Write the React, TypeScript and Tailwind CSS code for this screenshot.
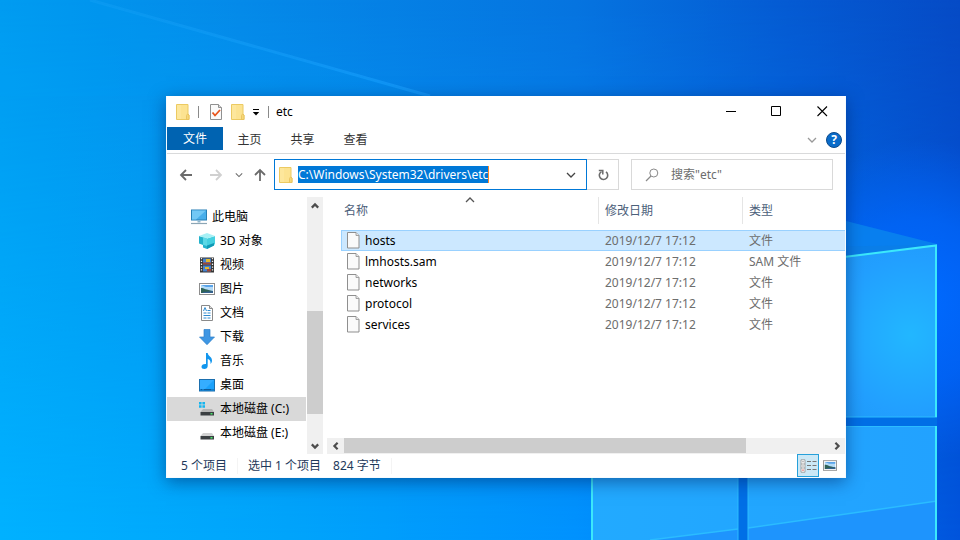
import React from "react";

type IconProps = { className?: string };

const Folder = ({ className = "" }: IconProps) => (
  <svg viewBox="0 0 14 18" className={`h-[18px] w-[14px] shrink-0 ${className}`} aria-hidden="true">
    <path d="M.5 1.500h11.500v9.500l1 1v4.500H.5z" fill="#fce391" stroke="#ecca62" />
    <path d="M10.500 16.500v-4l1-1.500 1.500 1v4.500z" fill="#f7d878" stroke="#e6c05a" strokeWidth=".8" />
    <path d="M1 2h4v14H1z" fill="#fde9a4" opacity=".6" />
  </svg>
);

const CheckedPage = () => (
  <svg viewBox="0 0 14 18" className="h-[18px] w-[14px] shrink-0" aria-hidden="true">
    <path d="M1.500 1.500h8l3 3v12h-11z" fill="#fafafa" stroke="#909090" />
    <path d="M9.500 1.500v3h3" fill="#ddd" stroke="#909090" />
    <path d="M3.500 9.500l2.500 3 5-5.500" fill="none" stroke="#e8541a" strokeWidth="1.800" />
  </svg>
);

const Page = () => (
  <svg viewBox="0 0 13 17" className="h-[17px] w-[13px] shrink-0" aria-hidden="true">
    <path d="M.5 .5h8.500l3 3v12.500H.5z" fill="#fafafa" stroke="#8f8f8f" />
    <path d="M9 .5v3h3" fill="#e8e8e8" stroke="#8f8f8f" strokeWidth=".8" />
  </svg>
);

const Chevron = ({ className = "size-[10px]" }: IconProps) => (
  <svg viewBox="0 0 10 10" className={`shrink-0 ${className}`} aria-hidden="true">
    <path d="M1 3l4 4 4-4" fill="none" stroke="currentColor" strokeWidth="1.300" />
  </svg>
);

const ScrollArrow = ({ className = "" }: IconProps) => (
  <svg viewBox="0 0 10 10" className={`size-[10px] shrink-0 text-[#4d4d4d] ${className}`} aria-hidden="true">
    <path d="M1.800 3.400L5 6.600l3.200-3.200" fill="none" stroke="currentColor" strokeWidth="2.200" />
  </svg>
);

const Arrow = ({ className = "" }: IconProps) => (
  <svg viewBox="0 0 14 14" className={`size-[14px] shrink-0 ${className}`} aria-hidden="true">
    <path d="M13 7H2M7 2L2 7l5 5" fill="none" stroke="currentColor" strokeWidth="1.800" />
  </svg>
);

const Photo = ({ className = "" }: IconProps) => (
  <svg viewBox="0 0 16 12" className={`shrink-0 ${className}`} aria-hidden="true">
    <rect x=".5" y=".5" width="15" height="11" fill="#fff" stroke="#8d8d8d" />
    <rect x="2" y="2" width="12" height="8" fill="#b5dbf7" />
    <path d="M2 2h12v2L7 4z" fill="#5aa4ea" />
    <path d="M2 5c3 0 5 2 12 3v2H2z" fill="#2f6257" />
    <path d="M5 9l9-1v2H3z" fill="#34618f" />
  </svg>
);

const Drive = ({ system = false }: { system?: boolean }) => (
  <svg viewBox="0 0 16 16" className="size-4 shrink-0" aria-hidden="true">
    {system && (
      <path d="M0 1h2.600v2.500H0zM3.400 1H6v2.500H3.400zM0 4.300h2.600v2.500H0zM3.400 4.300H6v2.500H3.400z" fill="#15b5ef" />
    )}
    <path d="M4 8h9l2 3H1.500z" fill={system ? "#b5b5b5" : "#d2d2d2"} />
    <path d="M1.500 11h13.500v3.500h-13.500z" fill="#3b3f42" />
    <rect x="11.500" y="12" width="2" height="1.500" fill="#49e86a" />
  </svg>
);

const icons: Record<string, React.ReactNode> = {
  pc: (
    <svg viewBox="0 0 16 16" className="size-4 shrink-0" aria-hidden="true">
      <rect x=".5" y="1" width="15" height="10" fill="#48aeea" stroke="#277fb5" />
      <path d="M1 1.500h14L5 10.500H1z" fill="#72c8f5" />
      <path d="M6.500 11.500h3v2h-3z" fill="#91b7cc" />
      <path d="M0 14.500h16" stroke="#8ca6b5" strokeWidth="1.200" />
    </svg>
  ),
  cube: (
    <svg viewBox="0 0 16 16" className="size-4 shrink-0" aria-hidden="true">
      <path d="M0 3l8 2.500V16l-4-1.500V12l-4-1.500z" fill="#23b2cb" />
      <path d="M16 3L8 5.500V16l7-3.500 1-2z" fill="#45d0e0" />
      <path d="M0 3l8-3 8 3-8 2.500z" fill="#a6f0f5" />
      <path d="M4 4.200l4 1.300v7.500l-4-1.200z" fill="#5bd8e6" />
      <path d="M8 12.500l7-2.500v2.500L8 16z" fill="#1199b5" />
    </svg>
  ),
  video: (
    <svg viewBox="0 0 16 16" className="size-4 shrink-0" aria-hidden="true">
      <path d="M1 .5h14v15H1z" fill="#353535" />
      <path d="M2.500 1v14M13.500 1v14" stroke="#eee" strokeWidth="1.300" strokeDasharray="1.300 1.500" />
      <path d="M4 1.500h8v6H4zM4 8.500h8v6H4z" fill="#4683cf" />
      <path d="M7 2h4v3H7zM6 10h4v2H6z" fill="#e2b92e" />
      <path d="M4 5.500h8v2H4zM8 12h4v2.500H8z" fill="#9d4639" />
    </svg>
  ),
  picture: <Photo className="h-3 w-4" />,
  document: (
    <svg viewBox="0 0 16 16" className="size-4 shrink-0" aria-hidden="true">
      <path d="M2.500 .5h8l3 3v12h-11z" fill="#fff" stroke="#8a8a8a" />
      <path d="M10.500 .5v3h3" fill="#ddd" stroke="#8a8a8a" />
      <path d="M4.500 6l1.500-3.500L7.500 6M8.500 5.500h3M4.500 8h3M8.500 8h3M4.500 10.500h7M4.500 13h3M8.500 13h3" stroke="#2f8bd0" fill="none" />
    </svg>
  ),
  download: (
    <svg viewBox="0 0 16 16" className="size-4 shrink-0" aria-hidden="true">
      <path d="M5 .5h6V8h4.500L8 15.700.5 8H5z" fill="#3e96e3" stroke="#2d7fc9" strokeWidth=".7" />
    </svg>
  ),
  music: (
    <svg viewBox="0 0 16 16" className="size-4 shrink-0" aria-hidden="true">
      <path d="M7 0h1.700c.3 3.300 4.300 3.500 4.300 7.500 0 1.500-.6 2.700-1.500 3.500.5-3-1-4.500-2.800-5v7c0 1.800-1.400 3-3.400 3C3.500 16 2.500 15 2.500 13.700c0-1.700 1.700-3 4.500-2.700z" fill="#1296ee" />
    </svg>
  ),
  desktop: (
    <svg viewBox="0 0 16 16" className="size-4 shrink-0" aria-hidden="true">
      <rect x=".5" y="2.500" width="15" height="11.500" fill="#1ba1fb" stroke="#1b6fae" />
      <path d="M1 3h14L6 12H1z" fill="#35adff" />
      <path d="M1.500 12.700h13" stroke="#0b4d86" strokeDasharray="2 1 8 1" />
    </svg>
  ),
  driveC: <Drive system />,
  driveE: <Drive />,
};

const places = [
  ["此电脑", "pc"],
  ["3D 对象", "cube"],
  ["视频", "video"],
  ["图片", "picture"],
  ["文档", "document"],
  ["下载", "download"],
  ["音乐", "music"],
  ["桌面", "desktop"],
  ["本地磁盘 (C:)", "driveC"],
  ["本地磁盘 (E:)", "driveE"],
];

const files = [
  ["hosts", "文件"],
  ["lmhosts.sam", "SAM 文件"],
  ["networks", "文件"],
  ["protocol", "文件"],
  ["services", "文件"],
];

const Wallpaper = () => (
  <svg
    viewBox="0 0 960 540"
    preserveAspectRatio="xMidYMid slice"
    className="absolute inset-0 h-full w-full"
    aria-hidden="true"
  >
    <defs>
      <linearGradient id="sky" x1="0" y1="0" x2="1" y2="0">
        <stop offset="0" stopColor="#009bf0" />
        <stop offset=".25" stopColor="#058ae9" />
        <stop offset=".6" stopColor="#0674e0" />
        <stop offset=".82" stopColor="#055bd3" />
        <stop offset="1" stopColor="#064bc6" />
      </linearGradient>
      <linearGradient id="low" x1="0" y1="0" x2="1" y2="0">
        <stop offset="0" stopColor="#00b1ff" />
        <stop offset=".3" stopColor="#00a4fb" />
        <stop offset=".6" stopColor="#0092fe" />
        <stop offset=".85" stopColor="#0070ee" />
        <stop offset="1" stopColor="#0054dc" />
      </linearGradient>
      <linearGradient id="fade" x1="0" y1="0" x2="0" y2="1">
        <stop offset="0" stopColor="#000" />
        <stop offset="1" stopColor="#fff" />
      </linearGradient>
      <mask id="lowMask">
        <rect width="960" height="540" fill="url(#fade)" />
      </mask>
      <radialGradient id="glow" gradientUnits="userSpaceOnUse" cx="920" cy="300" r="160">
        <stop offset="0" stopColor="#006aff" />
        <stop offset=".5" stopColor="#0068ff" stopOpacity=".7" />
        <stop offset="1" stopColor="#0068ff" stopOpacity="0" />
      </radialGradient>
      <radialGradient id="pane" gradientUnits="userSpaceOnUse" cx="910" cy="335" r="130">
        <stop offset="0" stopColor="#22b7ff" />
        <stop offset=".6" stopColor="#229fff" />
        <stop offset="1" stopColor="#1c98f5" />
      </radialGradient>
      <linearGradient id="paneLow" x1="0" y1="0" x2="1" y2="0">
        <stop offset="0" stopColor="#22aaff" />
        <stop offset="1" stopColor="#22a2ff" />
      </linearGradient>
      <linearGradient id="beam" gradientUnits="userSpaceOnUse" x1="90" y1="0" x2="430" y2="96">
        <stop offset="0" stopColor="#1ba5f8" stopOpacity=".5" />
        <stop offset="1" stopColor="#1ba0ff" />
      </linearGradient>
    </defs>
    <rect width="960" height="540" fill="url(#sky)" />
    <rect width="960" height="540" fill="url(#low)" mask="url(#lowMask)" />
    <rect width="960" height="540" fill="url(#glow)" />
    <path d="M90 0L430 96" stroke="url(#beam)" strokeWidth="3" opacity=".6" />
    <path d="M90 0L430 96H0V0z" fill="#00a4ff" opacity=".1" />
    <path d="M846 221l91 23-91 12z" fill="#0a86ee" opacity=".8" />
    <path d="M591 250l346-5v172H591z" fill="#0a7ee8" />
    <path d="M591 290l346-45v172H591z" fill="url(#pane)" />
    <path d="M591 417h346v9H748v114h-10V426H591z" fill="#006fe6" />
    <path d="M591 426h147v114H591zM748 426h189v114H748z" fill="url(#paneLow)" />
    <path d="M748 528l189-27v39H748zM650 540l88-11v11z" fill="#1e94fd" />
    <path d="M748 528l189-27M650 540l88-11" stroke="#2bbcff" strokeWidth="1.500" />
    <path d="M748 540V426.500h188M738 426v114M840 417h97" fill="none" stroke="#2bbcff" />
    <path d="M840 257.500l96-12V417M936 426v114M592 470v70" fill="none" stroke="#3ce8fb" strokeWidth="2" />
  </svg>
);

const tabs = ["主页", "共享", "查看"];

export default function App() {
  return (
    <main className="relative min-h-screen overflow-hidden bg-[#0078d7] font-['Noto_Sans','Noto_Sans_CJK_SC',sans-serif] text-xs text-[#222]">
      <Wallpaper />
      <section
        aria-label="etc"
        className="absolute top-24 right-[114px] left-[166px] border border-t-0 border-[#f5fbff] bg-white shadow-[0_4px_16px_rgba(0,30,90,0.5)]"
      >
        <header className="flex h-[31px] items-center">
          <div className="flex items-center pl-[9px]">
            <Folder />
            <span className="ml-2 h-3 w-px bg-[#8a8a8a]" />
            <button aria-label="属性" className="ml-[10px]">
              <CheckedPage />
            </button>
            <button aria-label="新建文件夹" className="ml-2">
              <Folder />
            </button>
            <button aria-label="自定义快速访问工具栏" className="ml-[7px]">
              <svg viewBox="0 0 8 8" className="size-2" aria-hidden="true">
                <path d="M1 1.500h6" stroke="#000" />
                <path d="M.8 4h6.400L4 7.400z" fill="#000" />
              </svg>
            </button>
            <span className="ml-2 h-3 w-px bg-[#8a8a8a]" />
          </div>
          <h1 className="ml-[7px] text-xs text-black">etc</h1>
          <div className="ml-auto flex text-black">
            <button aria-label="最小化" className="flex h-[31px] w-[46px] items-center justify-center">
              <svg viewBox="0 0 11 11" className="size-[11px]" aria-hidden="true">
                <path d="M1 5.500h10" stroke="currentColor" />
              </svg>
            </button>
            <button aria-label="最大化" className="flex h-[31px] w-[46px] items-center justify-center">
              <svg viewBox="0 0 11 11" className="size-[11px]" aria-hidden="true">
                <path d="M.5 .5h9v9h-9z" fill="none" stroke="currentColor" />
              </svg>
            </button>
            <button aria-label="关闭" className="flex h-[31px] w-[46px] items-center justify-center">
              <svg viewBox="0 0 11 11" className="size-[11px]" aria-hidden="true">
                <path d="M.5 .5l9.500 9.500M10 .5L.5 10" stroke="currentColor" strokeWidth="1.100" />
              </svg>
            </button>
          </div>
        </header>

        <nav aria-label="功能区" className="flex h-[27px] items-start border-b border-[#d9dadb]">
          <button className="h-[23px] w-14 bg-[#0063b1] text-white">文件</button>
          {tabs.map((tab) => (
            <button key={tab} className="h-[26px] w-[53px] text-[#333]">
              {tab}
            </button>
          ))}
          <button aria-label="展开功能区" className="mt-2 ml-auto text-[#999]">
            <Chevron />
          </button>
          <button
            aria-label="帮助"
            className="mt-[5px] mr-[3px] ml-[9px] flex size-4 items-center justify-center rounded-full border border-[#0b4a8c] bg-[#0a6bc9] font-bold text-white"
          >
            ?
          </button>
        </nav>

        <div className="flex h-[43px] items-start pt-[5px] pr-3">
          <div className="flex h-[31px] w-[107px] shrink-0 items-center pl-3 text-[#6b6b6b]">
            <button aria-label="后退">
              <Arrow />
            </button>
            <button aria-label="前进" className="ml-4 text-[#d0d0d0]">
              <Arrow className="rotate-180" />
            </button>
            <button aria-label="最近位置" className="ml-3">
              <Chevron className="size-2" />
            </button>
            <button aria-label="上移" className="ml-[10px]">
              <Arrow className="rotate-90" />
            </button>
          </div>
          <div className="flex h-[31px] min-w-0 grow items-center border border-[#0078d7] pl-1">
            <Folder />
            <input
              aria-label="地址"
              defaultValue="C:\Windows\System32\drivers\etc"
              className="ml-[5px] h-[17px] [field-sizing:content] border-r border-[#ff8728] bg-[#0078d7] text-white outline-none"
            />
            <button aria-label="历史地址" className="mr-[10px] ml-auto text-[#444]">
              <Chevron />
            </button>
          </div>
          <button
            aria-label="刷新"
            className="flex h-[31px] w-8 shrink-0 items-center justify-center border border-l-0 border-[#d9d9d9] text-[#6b6b6b]"
          >
            <svg viewBox="0 0 12 12" className="size-3" aria-hidden="true">
              <path d="M9 2.900A4.200 4.200 0 1 1 4.500 2.600" fill="none" stroke="currentColor" strokeWidth="1.600" />
              <path d="M1.800 1.400h4v4" fill="none" stroke="currentColor" strokeWidth="1.500" />
            </svg>
          </button>
          <label className="ml-3 flex h-[31px] w-[202px] shrink-0 items-center border border-[#d9d9d9] pl-[13px]">
            <svg viewBox="0 0 14 14" className="size-[14px] shrink-0" aria-hidden="true">
              <circle cx="8.800" cy="5" r="4" fill="none" stroke="#8a8a8a" />
              <path d="M6 8L1 13" stroke="#8a8a8a" strokeWidth="1.200" />
            </svg>
            <input
              aria-label="搜索"
              placeholder={'搜索"etc"'}
              className="ml-3 w-full min-w-0 outline-none placeholder:text-[#6d6d6d]"
            />
          </label>
        </div>

        <div className="flex">
          <ul className="min-w-0 flex-[0_0_139px] pt-2 pb-[9px] text-black">
            {places.map(([name, icon], i) => (
              <li key={name}>
                <button
                  className={`flex h-6 w-full items-center gap-[5px] whitespace-nowrap ${i === 0 ? "pl-6" : "pl-8"} ${
                    icon === "driveC" ? "bg-[#d9d9d9]" : ""
                  }`}
                >
                  {icons[icon]}
                  {name}
                </button>
              </li>
            ))}
          </ul>
          <div className="ml-px flex w-4 shrink-0 flex-col items-center bg-[#f0f0f0]">
            <button aria-label="向上滚动" className="flex h-[17px] items-center">
              <ScrollArrow className="rotate-180" />
            </button>
            <div className="flex w-full grow flex-col">
              <div className="grow-[97]" />
              <div className="w-full grow-[103] bg-[#cdcdcd]" />
              <div className="grow-[23]" />
            </div>
            <button aria-label="向下滚动" className="flex h-[17px] items-center">
              <ScrollArrow />
            </button>
          </div>

          <div className="flex min-w-0 grow flex-col pl-1">
            <div className="pl-[14px]">
              <table className="w-full table-fixed border-separate border-spacing-0 text-left">
                <colgroup>
                  <col />
                  <col className="w-[144px]" />
                  <col className="w-[102px]" />
                </colgroup>
                <thead className="text-[#4c607a]">
                  <tr>
                    <th className="relative h-[33px] p-0 align-top font-normal">
                      <Chevron className="absolute -top-0.5 left-1/2 size-[10px] -translate-x-1/2 rotate-180 text-[#555]" />
                      <div className="h-[27px] border-r border-[#e5e5e5] pl-[3px] leading-[27px]">名称</div>
                    </th>
                    <th className="h-[33px] p-0 align-top font-normal">
                      <div className="h-[27px] border-r border-[#e5e5e5] pl-[6px] leading-[27px]">修改日期</div>
                    </th>
                    <th className="h-[33px] p-0 align-top font-normal">
                      <div className="h-[27px] pl-[6px] leading-[27px]">类型</div>
                    </th>
                  </tr>
                </thead>
                <tbody className="text-[#6d6d6d]">
                  {files.map(([name, type], i) => {
                    const edge = i === 0 ? "border-y border-[#99d1ff] bg-[#cce8ff]" : "";
                    return (
                      <tr key={name} className="h-[21px]">
                        <td className={`p-0 ${edge} ${i === 0 ? "border-l pl-[5px]" : "pl-[6px]"}`}>
                          <div className="flex items-center gap-[5px] leading-[19px] text-black">
                            <Page />
                            {name}
                          </div>
                        </td>
                        <td className={`p-0 pl-[6px] leading-[19px] ${edge}`}>2019/12/7 17:12</td>
                        <td className={`p-0 pl-[6px] leading-[19px] ${edge}`}>{type}</td>
                      </tr>
                    );
                  })}
                </tbody>
              </table>
            </div>
            <div className="mt-auto flex h-4 items-stretch bg-[#f0f0f0]">
              <button aria-label="向左滚动" className="flex w-[17px] items-center justify-center">
                <ScrollArrow className="rotate-90" />
              </button>
              <div className="grow">
                <div className="h-[15px] w-[83%] bg-[#cdcdcd]" />
              </div>
              <button aria-label="向右滚动" className="flex w-[17px] items-center justify-center">
                <ScrollArrow className="-rotate-90" />
              </button>
            </div>
          </div>
        </div>

        <footer className="flex h-[23px] items-center pl-[14px] text-[#1e395b]">
          <span>5 个项目</span>
          <span className="ml-[10px] h-4 w-px bg-[#f4f4f4]" />
          <span className="ml-[10px]">选中 1 个项目</span>
          <span className="ml-3">824 字节</span>
          <span className="ml-[10px] h-4 w-px bg-[#f4f4f4]" />
          <button
            aria-label="详细信息"
            className="ml-auto flex h-[23px] w-[22px] items-center justify-center border border-[#26a0da] bg-[#cbe8f6]"
          >
            <svg viewBox="0 0 17 14" className="h-[14px] w-[17px] shrink-0" aria-hidden="true">
              <path d="M1 .8h4v12.400H1zM1 5h4M1 9h4" fill="#fff" stroke="#999" strokeWidth=".9" />
              <path d="M2.500 2.300h1v1h-1zM2.500 6.500h1v1h-1z" fill="#555" />
              <path d="M2.400 10.500h1.200v1.200H2.400z" fill="#d33" />
              <path d="M7 2.500h4M12.500 2.500h4M7 6.500h4M12.500 6.500h4M7 10.500h4M12.500 10.500h4" stroke="#777" />
            </svg>
          </button>
          <button aria-label="大图标" className="mr-2 ml-1">
            <Photo className="h-[11px] w-[14px]" />
          </button>
        </footer>
      </section>
    </main>
  );
}
